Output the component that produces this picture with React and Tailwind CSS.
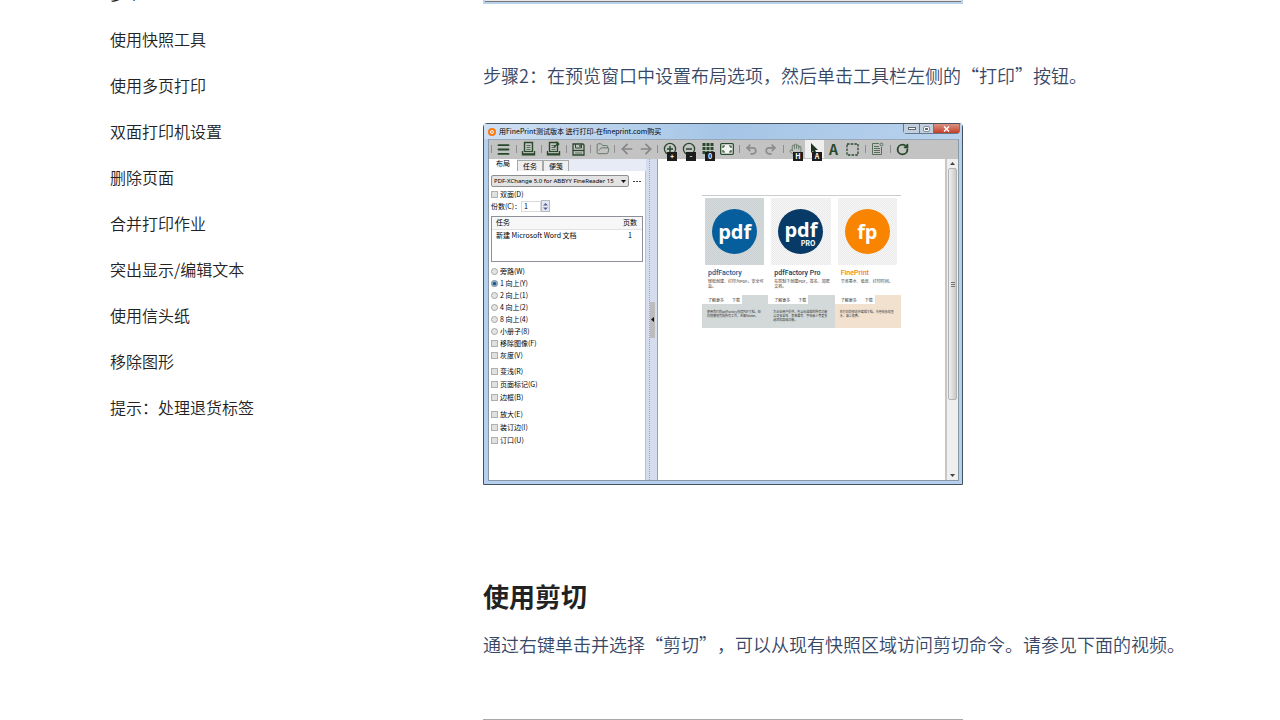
import {
  ArrowLeft,
  ArrowRight,
  FolderOpen,
  Hand,
  Menu,
  Redo2,
  RotateCw,
  Undo2,
} from 'lucide-react';

const navItems = [
  '多个',
  '使用快照工具',
  '使用多页打印',
  '双面打印机设置',
  '删除页面',
  '合并打印作业',
  '突出显示/编辑文本',
  '使用信头纸',
  '移除图形',
  '提示：处理退货标签',
];

const layouts = ['旁路(W)', '1 向上(Y)', '2 向上(1)', '4 向上(2)', '8 向上(4)', '小册子(8)'];

const optionGroups = [
  ['变浅(R)', '页面标记(G)', '边框(B)'],
  ['放大(E)', '装订边(I)', '订口(U)'],
];

const products = [
  {
    name: 'pdfFactory',
    mark: 'pdf',
    desc: '轻松创建、打印为PDF。安全可靠。',
    note: '使用我们的pdfFactory创建PDF文档，轻松快捷地完成所有工作，无需Adobe。',
    title: 'text-[#065e9c]',
    circle: 'bg-[#065e9c]',
    tile: 'bg-[conic-gradient(#cbd1d2_25%,#d5dadb_0_50%,#cbd1d2_0_75%,#d5dadb_0)]',
    panel: 'bg-[#d3d9d8]',
  },
  {
    name: 'pdfFactory Pro',
    mark: 'pdf',
    sub: 'PRO',
    desc: '在控制下创建PDF，签名、加密文档。',
    note: '为企业用户提供，包含标准版的所有功能以及安全性、表单填写、字体嵌入等更多选项和高级功能。',
    title: 'text-[#073a66]',
    circle: 'bg-[#073a66]',
    tile: 'bg-[conic-gradient(#e9e9e9_25%,#f8f8f8_0_50%,#e9e9e9_0_75%,#f8f8f8_0)]',
    panel: 'bg-[#d3d9d8]',
  },
  {
    name: 'FinePrint',
    mark: 'fp',
    desc: '节省墨水、纸张、打印时间。',
    note: '在打印前预览并编辑文档，节省纸张和墨水，减少浪费。',
    title: 'text-[#f98400]',
    circle: 'bg-[#f98400]',
    tile: 'bg-[conic-gradient(#e9e9e9_25%,#f8f8f8_0_50%,#e9e9e9_0_75%,#f8f8f8_0)]',
    panel: 'bg-[#f2e1ce]',
  },
];

const Printer = ({ marked }) => (
  <svg width="15" height="16" viewBox="0 0 15 16" fill="none" stroke="#284a2b">
    <path d="M3.5 10.5V1.5h8v9" strokeWidth="1.4" />
    <path d="M5.5 4.5h4M5.5 6.5h4M5.5 8.5h4" strokeWidth=".7" />
    <path d="M3 10.5h9" strokeWidth="1.2" />
    <path d="M1.5 10v3.8h12V10" strokeWidth="1.4" />
    <path d="M2 12.5h11" strokeWidth=".8" />
    {marked && <path d="M8 6l5-4M10 1l3 3" strokeWidth="1.4" />}
  </svg>
);

const Floppy = () => (
  <svg width="13" height="13" viewBox="0 0 13 13" fill="none" stroke="#284a2b">
    <path d="M1 1h10l1 1v10H1z" strokeWidth="1.3" />
    <path d="M3.5 1v4h6V1" />
    <path d="M8 2v2" strokeWidth="1.3" />
    <path d="M1 7.5h11" strokeWidth="1.3" />
    <path d="M3 10h7" strokeWidth=".7" />
  </svg>
);

const ZoomMark = ({ minus }) => (
  <svg width="14" height="14" viewBox="0 0 14 14" fill="none" stroke="#284a2b">
    <circle cx="7" cy="7" r="5.6" strokeWidth="1.3" />
    <path d={minus ? 'M4 7h6' : 'M4 7h6M7 4v6'} strokeWidth="1.5" />
  </svg>
);

const Dots = () => (
  <svg width="12" height="12" viewBox="0 0 12 12" fill="#284a2b">
    {[0, 4, 8].map(y => [0.5, 4.5, 8.5].map(x => (
      <rect key={`${x}-${y}`} x={x} y={y} width="3" height="3" />
    )))}
  </svg>
);

const Fit = () => (
  <svg width="14" height="12" viewBox="0 0 14 12" fill="#f2f4f2" stroke="#284a2b">
    <rect x=".7" y=".7" width="12.6" height="10.6" rx="1" strokeWidth="1.3" />
    <path d="M3 5V3h2M9 3h2v2M11 7v2H9M5 9H3V7" fill="none" strokeWidth="1.2" />
  </svg>
);

const Pointer = () => (
  <svg width="9" height="13" viewBox="0 0 9 13" fill="#1d3320">
    <path d="M1 0l7 7H5l2 4-2 1-2-4-2 2z" />
  </svg>
);

const Marquee = () => (
  <svg width="13" height="13" viewBox="0 0 13 13" fill="none" stroke="#284a2b">
    <rect x="1" y="1" width="11" height="11" strokeWidth="1.3" strokeDasharray="2.5 1.2" />
  </svg>
);

const Note = () => (
  <svg width="13" height="14" viewBox="0 0 13 14" fill="none" stroke="#56705a">
    <path d="M8 1.5H1.5v11h9V5" />
    <path d="M3 4.5h5M3 6.5h6M3 8.5h6M3 10.5h6" />
    <circle cx="10.5" cy="2.5" r="1.4" />
  </svg>
);

const Sep = ({ narrow }) => (
  <span className={`${narrow ? 'w-[5px]' : 'w-[6px]'} flex shrink-0 justify-center`}>
    <span className="h-2 w-px bg-[#8e8e8e]" />
  </span>
);

const Tool = ({ label, badge, active, children }) => (
  <button
    aria-label={label}
    className={`${active ? 'bg-[#efefef]' : ''} relative flex h-[18px] w-[19px] shrink-0 items-center justify-center text-[#284a2b]`}
  >
    {children}
    {badge && (
      <span className="absolute top-[12px] left-[7px] flex h-[9px] w-[10px] items-center justify-center bg-[#1c1c1c] text-[7px] leading-none font-bold text-white">
        {badge}
      </span>
    )}
  </button>
);

const Toolbar = () => (
  <div className="flex h-5 items-center border-t border-[#98a6b5] bg-[#c3c3c3] pb-px">
    <Sep narrow />
    <Tool label="菜单"><Menu size={15} strokeWidth={3} /></Tool>
    <Sep />
    <Tool label="打印"><Printer /></Tool>
    <Sep />
    <Tool label="打印并关闭"><Printer marked /></Tool>
    <Sep />
    <Tool label="保存"><Floppy /></Tool>
    <Sep narrow />
    <Tool label="打开"><FolderOpen size={14} strokeWidth={1.5} className="text-[#56705a]" /></Tool>
    <Sep narrow />
    <Tool label="后退"><ArrowLeft size={16} strokeWidth={2.5} className="text-[#858585]" /></Tool>
    <Tool label="前进"><ArrowRight size={16} strokeWidth={2.5} className="text-[#858585]" /></Tool>
    <Sep narrow />
    <Tool label="放大" badge="+"><ZoomMark /></Tool>
    <Tool label="缩小" badge="-"><ZoomMark minus /></Tool>
    <Tool label="多页" badge="0"><Dots /></Tool>
    <Tool label="适合窗口"><Fit /></Tool>
    <Sep />
    <Tool label="撤消"><Undo2 size={13} strokeWidth={3} className="text-[#8b8b8b]" /></Tool>
    <Tool label="重做"><Redo2 size={13} strokeWidth={3} className="text-[#8b8b8b]" /></Tool>
    <Sep />
    <Tool label="手形" badge="H"><Hand size={13} strokeWidth={1.5} className="text-[#56705a]" /></Tool>
    <Tool label="选择" badge="A" active><Pointer /></Tool>
    <Tool label="文本"><span className="text-[14px] leading-none font-bold">A</span></Tool>
    <Tool label="快照"><Marquee /></Tool>
    <Sep />
    <Tool label="便笺"><Note /></Tool>
    <Sep />
    <Tool label="刷新"><RotateCw size={13} strokeWidth={3.5} /></Tool>
  </div>
);

const Check = ({ label }) => (
  <label className="flex h-full items-center gap-[2px]">
    <input type="checkbox" className="h-[7px] w-[7px] appearance-none border border-[#b0b0b0] bg-[#e0e0e0]" />
    {label}
  </label>
);

const Sidebar = () => (
  <div className="flex w-[157px] shrink-0 flex-col bg-[#e6ebf6]">
    <div className="flex h-3 items-end">
      <button className="h-3 w-7 bg-white pb-[3px] leading-none">布局</button>
      <button className="h-[11px] w-[26px] border border-b-0 border-[#a9a9a9] bg-[#efefef] leading-none">任务</button>
      <button className="h-[11px] w-[26px] border border-b-0 border-[#a9a9a9] bg-[#efefef] leading-none">便笺</button>
    </div>
    <div className="flex-1 border-r border-[#b9bfd0] bg-white pt-1 pr-[2px] pl-[2px]">
      <div className="flex items-center gap-1">
        <div className="relative">
          <select
            aria-label="打印机"
            className="block h-3 w-[138px] appearance-none rounded-xs border border-[#8f8f8f] bg-[#e3e3e3] pl-[2px] font-['Noto_Sans'] text-[6px] leading-none"
          >
            <option>PDF-XChange 5.0 for ABBYY FineReader 15</option>
          </select>
          <svg className="pointer-events-none absolute top-[5px] right-[3px]" width="5" height="3" viewBox="0 0 5 3">
            <path d="M0 0h5L2.5 3z" fill="#111" />
          </svg>
        </div>
        <button aria-label="更多" className="flex gap-px">
          <span className="h-px w-[2px] bg-[#444]" />
          <span className="h-px w-[2px] bg-[#444]" />
          <span className="h-px w-[2px] bg-[#444]" />
        </button>
      </div>
      <div className="mt-px h-3">
        <Check label="双面(D)" />
      </div>
      <div className="flex h-3 items-center">
        <label htmlFor="copies" className="w-[30px] whitespace-nowrap">份数(C)：</label>
        <input id="copies" defaultValue="1" className="h-[11px] w-5 border border-[#dadada] pl-[2px] text-[7px]" />
        <span className="flex h-3 w-[9px] flex-col items-center justify-center border border-[#b5b9c4] bg-[#e4e8f2]">
          <svg width="5" height="7" viewBox="0 0 5 7" fill="#536199">
            <path d="M0 2.5h5L2.5 0zM0 4.5h5L2.5 7z" />
          </svg>
        </span>
      </div>
      <div className="mt-1 h-[46px] w-[152px] border border-[#8d9099]">
        <table className="w-full">
          <thead className="bg-[#f7f7f7]">
            <tr className="h-3 border-b border-[#e2e2e2]">
              <th className="pl-1 text-left font-normal">任务</th>
              <th className="w-6 font-normal">页数</th>
            </tr>
          </thead>
          <tbody>
            <tr className="h-3">
              <td className="pl-1">新建 Microsoft Word 文档</td>
              <td className="text-center">1</td>
            </tr>
          </tbody>
        </table>
      </div>
      <div className="mt-[3px]">
        {layouts.map((label, i) => (
          <label key={label} className="flex h-3 items-center gap-[2px]">
            <input
              type="radio"
              name="layout"
              defaultChecked={i === 1}
              className="h-[7px] w-[7px] appearance-none rounded-full border border-[#a5a5a5] bg-[#e4e4e4] checked:border-2 checked:border-[#8fa3b5] checked:bg-[#0b4f86]"
            />
            {label}
          </label>
        ))}
        <div className="h-3"><Check label="移除图像(F)" /></div>
        <div className="h-3"><Check label="灰度(V)" /></div>
      </div>
      {optionGroups.map(group => (
        <div key={group[0]} className="mt-1">
          {group.map(label => (
            <div key={label} className="h-[13px]"><Check label={label} /></div>
          ))}
        </div>
      ))}
    </div>
  </div>
);

const Product = ({ item }) => (
  <div className="flex flex-col">
    <div className="pt-[2px] pr-1 pl-[3px]">
      <div className={`${item.tile} flex h-[67px] items-center justify-center bg-size-[2px_2px]`}>
        <div className={`${item.circle} ${item.sub ? 'pt-1' : ''} flex h-[45px] w-[45px] flex-col items-center justify-center rounded-full text-white`}>
          <span className="font-['Open_Sans'] text-[20px] leading-5 font-bold">{item.mark}</span>
          {item.sub && <span className="self-end pr-2 text-[7px] leading-[7px] font-bold">{item.sub}</span>}
        </div>
      </div>
    </div>
    <div className="h-[30px] pt-1 pr-1 pl-[6px]">
      <h3 className={`${item.title} font-[Roboto] text-[7px] leading-[9px] font-medium`}>{item.name}</h3>
      <p className="mt-px text-[4px] leading-[5px] text-[#333]">{item.desc}</p>
    </div>
    <div className={`${item.panel} h-[33px]`}>
      <div className="flex h-[9px] w-10 items-center gap-2 bg-white pl-[6px] text-[4px] text-[#333]">
        <span>了解更多</span>
        <span>下载</span>
      </div>
      <p className="px-[5px] pt-[6px] text-[3px] leading-[4px] text-[#333]">{item.note}</p>
    </div>
  </div>
);

const Preview = () => (
  <div className="flex min-w-0 flex-1 justify-center border-l border-[#9aa1aa] bg-white pt-9">
    <div className="grid h-[133px] w-[199px] grid-cols-3 border-t border-[#c9cccc]">
      {products.map(item => <Product key={item.name} item={item} />)}
    </div>
  </div>
);

const AppWindow = () => (
  <div className="flex h-[362px] w-[480px] flex-col rounded-t-sm border border-[#45535f] bg-[#b4d0ee] text-[7px] leading-none font-normal text-black">
    <div className="flex h-[15px] shrink-0 justify-between bg-linear-to-r from-[#cfe0f3] via-[#a5c5e6] to-[#b9d2ee]">
      <div className="flex items-center gap-[3px] pl-1">
        <span className="flex h-2 w-2 items-center justify-center rounded-full bg-[#f57c14]">
          <span className="h-1 w-1 rounded-full border border-white" />
        </span>
        用FinePrint测试版本 进行打印-在fineprint.com购买
      </div>
      <div className="mr-[2px] flex h-[10px] rounded-b-sm border border-t-0 border-[#65788c]">
        <button aria-label="最小化" className="flex w-4 items-center justify-center border-r border-[#65788c] bg-[#c1cfdf]">
          <span className="h-[3px] w-2 border border-[#606a75] bg-white" />
        </button>
        <button aria-label="最大化" className="flex w-[14px] items-center justify-center border-r border-[#65788c] bg-[#c1cfdf]">
          <span className="flex h-[6px] w-[7px] items-center justify-center rounded-xs border border-[#808a95] bg-white">
            <span className="h-[2px] w-[3px] bg-[#606a75]" />
          </span>
        </button>
        <button aria-label="关闭" className="flex w-[25px] items-center justify-center bg-linear-to-b from-[#dc9284] to-[#c03b22]">
          <svg width="7" height="6" viewBox="0 0 7 6" stroke="#fff" strokeWidth="1.5">
            <path d="M1 .5l5 5M6 .5l-5 5" />
          </svg>
        </button>
      </div>
    </div>
    <div className="mr-[3px] mb-[3px] ml-1 flex min-h-0 flex-1 flex-col border border-t-0 border-[#8997a6]">
      <Toolbar />
      <div className="flex min-h-0 flex-1">
        <Sidebar />
        <div className="flex w-[11px] shrink-0 items-center justify-center bg-[#d5dcee]">
          <div className="flex h-full items-center border-l border-dotted border-[#9aa6c4]">
            <button aria-label="折叠面板" className="flex h-9 w-[5px] items-center justify-center bg-[#bcbcbc]">
              <svg width="3" height="5" viewBox="0 0 3 5"><path d="M3 0v5L0 2.5z" fill="#111" /></svg>
            </button>
          </div>
        </div>
        <Preview />
        <div className="flex w-[13px] shrink-0 flex-col items-center border-l-2 border-[#c6c6c6] bg-[#efefef] py-[3px]">
          <svg width="5" height="3" viewBox="0 0 5 3"><path d="M0 3h5L2.5 0z" fill="#444" /></svg>
          <div className="mt-[3px] flex h-[232px] w-[9px] flex-col items-center justify-center gap-px rounded-xs border border-[#b2b2b2] bg-linear-to-r from-[#f1f1f1] to-[#c8c8c8]">
            <span className="h-px w-1 bg-[#777]" />
            <span className="h-px w-1 bg-[#777]" />
            <span className="h-px w-1 bg-[#777]" />
          </div>
          <span className="flex-1" />
          <svg width="5" height="3" viewBox="0 0 5 3"><path d="M0 0h5L2.5 3z" fill="#444" /></svg>
        </div>
      </div>
    </div>
  </div>
);

export default function App() {
  return (
    <div
      lang="zh-CN"
      className="flex h-screen overflow-hidden bg-white font-['Noto_Sans_CJK_SC',sans-serif] font-[350]"
    >
      <nav className="w-[483px] shrink-0 pl-[110px]">
        <ul className="-mt-[30px]">
          {navItems.map(item => (
            <li key={item}>
              <a href="#" className="block text-base leading-[46px] text-[#222]">{item}</a>
            </li>
          ))}
        </ul>
      </nav>

      <main className="min-w-0 flex-1 text-lg text-[#374766]">
        <div className="h-1 w-[480px] border-x-2 border-b-2 border-[#b9d1ea] bg-[#e8e8e8]">
          <div className="h-[2px] border-b border-[#777]" />
        </div>
        <p className="mt-[55px] leading-8">步骤2：在预览窗口中设置布局选项，然后单击工具栏左侧的“打印”按钮。</p>
        <div className="mt-8">
          <AppWindow />
        </div>
        <h2 className="mt-[91px] text-[26px] leading-10 font-bold text-[#222]">使用剪切</h2>
        <p className="mt-3 leading-8 [text-spacing-trim:space-all]">
          通过右键单击并选择“剪切”，可以从现有快照区域访问剪切命令。请参见下面的视频。
        </p>
        <div className="mt-[59px] h-[270px] w-[480px] bg-[#a9a9a9]" />
      </main>
    </div>
  );
}
